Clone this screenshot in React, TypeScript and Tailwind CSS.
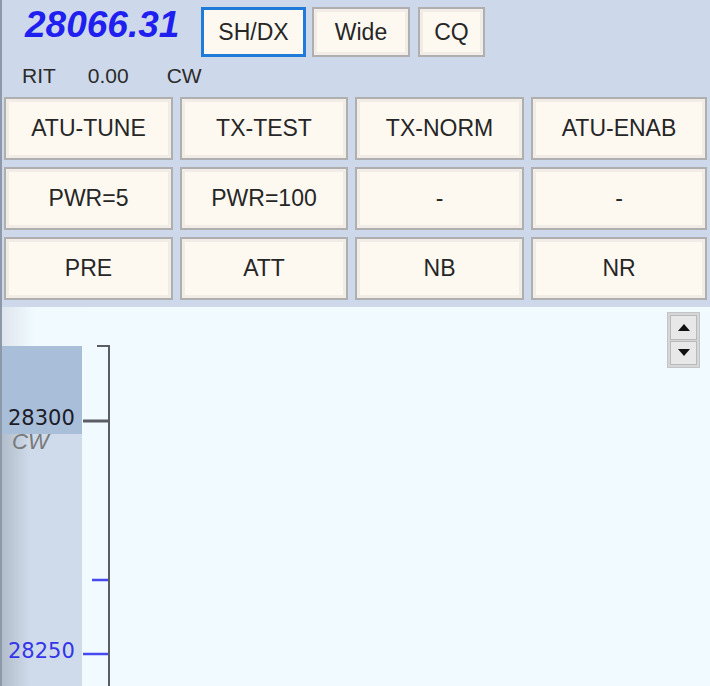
import React from "react"

const GRID = [
    ["ATU-TUNE", "TX-TEST", "TX-NORM", "ATU-ENAB"],
    ["PWR=5", "PWR=100", "-", "-"],
    ["PRE", "ATT", "NB", "NR"],
]

const FONT = "font-['Liberation_Sans',Arial,sans-serif]"

const RigButton = ({ label, className = "" }: any) => {
    return (
        <div
            className={`flex items-center justify-center bg-[#fdf9f1] border-2 border-[#afafaf] shadow-[inset_0_0_0_3px_#f1ede6] text-[23px] text-[#262626] ${className}`}
        >
            {label}
        </div>
    )
}

export default function App() {
    return (
        <div className={`w-[710px] h-[686px] overflow-hidden flex flex-col bg-[#cdd9ea] border-l-2 border-[#8d98a8] ${FONT}`}>
            {/* top: frequency + mode buttons */}
            <div className="flex items-start pt-[7px] pl-[23px]">
                <div className="w-[176px] text-[37px] leading-[36px] font-bold italic text-[#1f1ff0]">
                    28066.31
                </div>
                <div className="w-[105px] h-[50px] flex items-center justify-center bg-[#fdf9f1] border-[3px] border-[#1f7ad8] text-[23px] text-[#262626]">
                    SH/DX
                </div>
                <RigButton label="Wide" className="ml-[6px] w-[98px] h-[50px]" />
                <RigButton label="CQ" className="ml-[8px] w-[67px] h-[50px]" />
            </div>

            <div className="flex mt-[7px] h-[24px] leading-[24px] pl-[20px] text-[21px] text-[#2b2b2b]">
                <span>RIT</span>
                <span className="ml-[32px]">0.00</span>
                <span className="ml-[38px]">CW</span>
            </div>

            {/* button grid */}
            <div className="mt-[9px] pl-[2px] grid grid-cols-[169px_168px_169px_176px] auto-rows-[63px] gap-x-[7px] gap-y-[7px]">
                {GRID.flat().map((label, i) => (
                    <RigButton key={i} label={label} />
                ))}
            </div>

            {/* band scale */}
            <div className="relative mt-[7px] flex-1 flex bg-[#f0faff] overflow-hidden">
                <div className="w-[80px] flex flex-col">
                    <div className="h-[39px] bg-linear-to-r from-[#dfe5ec] via-[#f0faff] via-40% to-[#f0faff]" />
                    <div className="h-[88px] bg-[#a9bed9]" />
                    <div className="flex-1 overflow-hidden bg-linear-to-r from-[#b2bdcb] via-[#cfdbea] via-35% to-[#cfdbea]">
                        <div className="-mt-[3px] pl-[10px] text-[22px] leading-[22px] italic text-[#7a7a7a]">CW</div>
                    </div>
                </div>

                <svg className="absolute left-0 top-0" width="708" height="379">
                    <line x1="107" y1="38" x2="107" y2="379" stroke="#5a5e62" strokeWidth="2" />
                    <line x1="95" y1="39" x2="108" y2="39" stroke="#5a5e62" strokeWidth="2" />
                    <line x1="81" y1="114" x2="108" y2="114" stroke="#5a5e62" strokeWidth="3" />
                    <line x1="90" y1="273" x2="106" y2="273" stroke="#4848f0" strokeWidth="2.5" />
                    <line x1="81" y1="347" x2="106" y2="347" stroke="#4848f0" strokeWidth="2.5" />
                </svg>

                <div className="absolute left-[6px] top-[101px] font-['DejaVu_Sans',sans-serif] text-[21px] leading-[21px] text-[#1c1c28]">
                    28300
                </div>
                <div className="absolute left-[6px] top-[334px] font-['DejaVu_Sans',sans-serif] text-[21px] leading-[21px] text-[#3434ea]">
                    28250
                </div>

                {/* spinner */}
                <div className="absolute left-[665px] top-[5px] w-[33px] h-[56px] flex flex-col gap-[1px] p-[2px] bg-[#d4d6d8] border border-[#c2c4c6]">
                    <div className="flex-1 flex items-center justify-center bg-[#e8e8e8] border border-[#b9b9b9]">
                        <svg width="12" height="7" viewBox="0 0 12 7"><polygon points="6,0 12,7 0,7" fill="#111" /></svg>
                    </div>
                    <div className="flex-1 flex items-center justify-center bg-[#e8e8e8] border border-[#b9b9b9]">
                        <svg width="12" height="7" viewBox="0 0 12 7"><polygon points="0,0 12,0 6,7" fill="#111" /></svg>
                    </div>
                </div>
            </div>
        </div>
    )
}
